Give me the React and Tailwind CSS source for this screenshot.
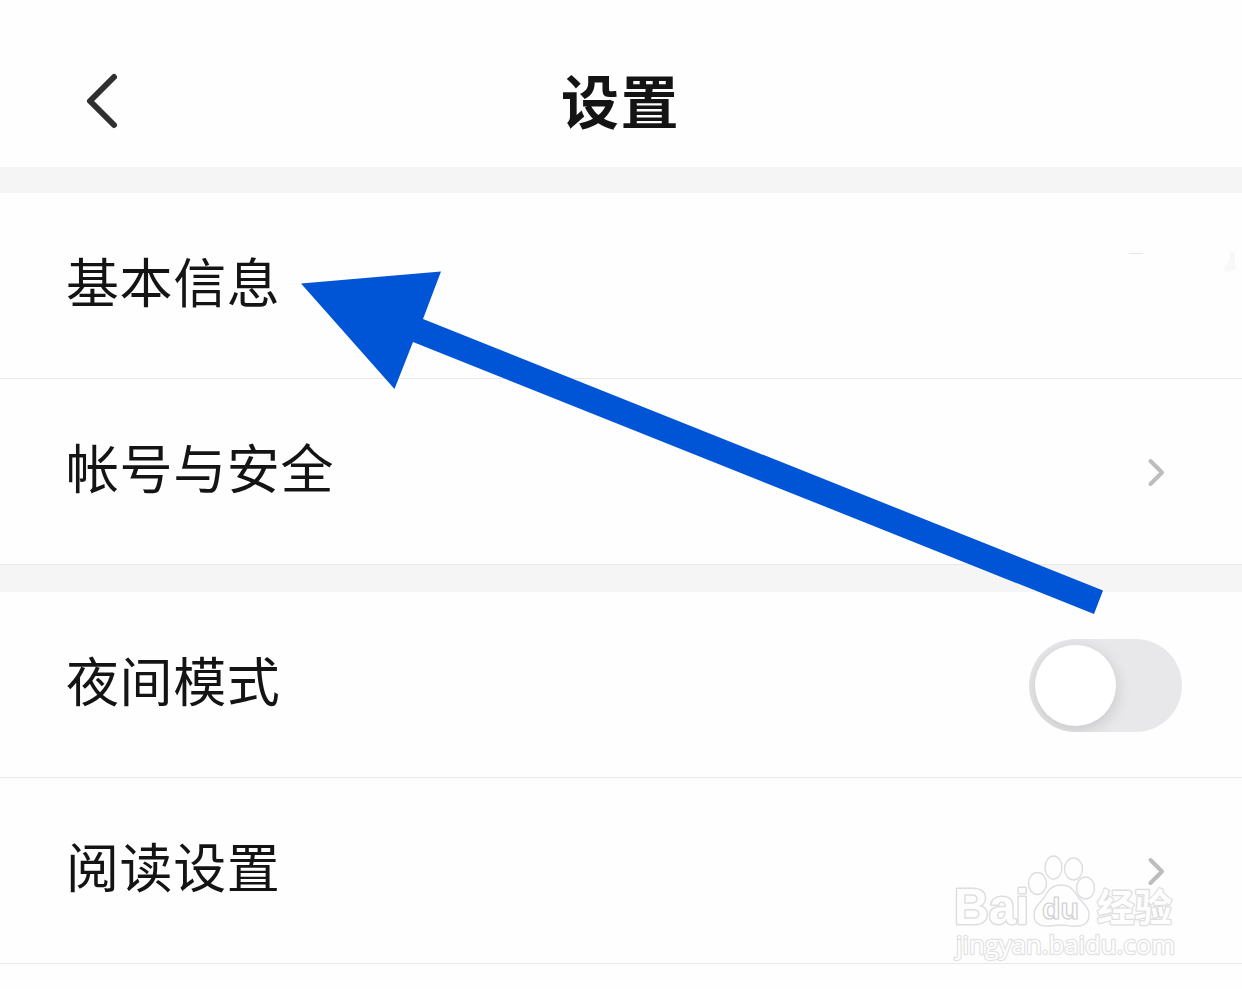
import React from "react";

const SECTIONS = [
  [
    { label: "基本信息", type: "faded" },
    { label: "帐号与安全", type: "link" },
  ],
  [
    { label: "夜间模式", type: "switch" },
    { label: "阅读设置", type: "link" },
  ],
];

function BackIcon() {
  return (
    <svg viewBox="0 0 40 60" className="w-10 h-15" fill="none" stroke="#303031"
      strokeWidth="6" strokeLinecap="round" strokeLinejoin="round">
      <path d="M32 6 8 30l24 24" />
    </svg>
  );
}

function Chevron() {
  return (
    <svg viewBox="0 0 24 32" className="w-6 h-8 mr-[17px]" fill="none" stroke="#bdbdbd"
      strokeWidth="4" strokeLinecap="round" strokeLinejoin="round">
      <path d="M9.5 5 21 16.500 9.5 28" />
    </svg>
  );
}

function Switch() {
  return (
    <button type="button" role="switch" aria-checked="false"
      className="w-[153px] h-[93px] mt-0.5 p-1.5 rounded-full bg-[#e8e8ea] overflow-hidden">
      <span className="block w-[81px] h-[81px] rounded-full bg-white shadow-[0_4px_16px_rgba(0,0,0,0.15)]" />
    </button>
  );
}

// Valor casi borrado a la derecha de la fila
function FadedValue() {
  return (
    <svg viewBox="0 0 120 40" className="w-[120px] h-10 -mr-[60px] -mt-[42px]">
      <path d="M7 8.500h14" stroke="#e6e6e6" fill="none" />
      <path d="M108 7v8l-5 6-1 5 5 1 6-3V7Z" fill="#f8f8f8" />
    </svg>
  );
}

function Row({ label, type }) {
  return (
    <div className="flex items-center justify-between h-[186px] pl-[66px] pr-[60px] border-b border-[#e8e8e8] bg-[#fefefe]">
      <span className="text-[53px] leading-[60px] tracking-[0.6px] -mt-3">{label}</span>
      {type === "faded" && <FadedValue />}
      {type === "link" && <Chevron />}
      {type === "switch" && <Switch />}
    </div>
  );
}

// Flecha que señala la primera opción
function Arrow() {
  return (
    <svg viewBox="0 0 1242 989" className="absolute inset-0 w-full h-full pointer-events-none">
      <path d="M301 283.5 441 271.5 423 319 1103 590.5 1094 614 413 342 394.5 389Z" fill="#0055d6" />
    </svg>
  );
}

function Watermark() {
  return (
    <svg viewBox="0 0 250 120" className="absolute left-[940px] top-[850px] w-[250px] h-[120px] pointer-events-none"
      fill="#fefefe" stroke="#dedede" strokeWidth="1.4" strokeLinejoin="round">
      <text x="14" y="74" fontSize="50" textLength="75" lengthAdjust="spacingAndGlyphs"
        strokeWidth="3" paintOrder="stroke"
        className="font-['Liberation_Sans',sans-serif] font-bold">Bai</text>
      <ellipse cx="97.500" cy="33.500" rx="9" ry="11" />
      <ellipse cx="113.500" cy="17.500" rx="8.500" ry="11.500" />
      <ellipse cx="133.500" cy="19" rx="9" ry="11" />
      <ellipse cx="145.500" cy="38" rx="9" ry="11" />
      <path d="M121 35C110 35 107 43 103 49C98 55 94 58 94 65C94 73 100 76 107 76C113 76 116 75 121 75C127 75 131 77 137 76C145 76 150 71 149 63C148 56 142 53 138 47C134 40 130 35 121 35Z" />
      <text x="102" y="69" fontSize="30" textLength="37" lengthAdjust="spacingAndGlyphs"
        stroke="#cfcfcf" strokeWidth="1.2"
        className="font-['Liberation_Sans',sans-serif] font-bold">du</text>
      <text x="157" y="71" fontSize="38" textLength="75" lengthAdjust="spacingAndGlyphs"
        strokeWidth="2.6" paintOrder="stroke"
        className="font-['Noto_Sans_CJK_SC',sans-serif] font-bold">经验</text>
      <text x="16" y="104" fontSize="25" textLength="219" lengthAdjust="spacingAndGlyphs"
        stroke="#e2e2e2" strokeWidth="2.4" paintOrder="stroke"
        className="font-['Open_Sans',sans-serif]">jingyan.baidu.com</text>
    </svg>
  );
}

export default function App() {
  return (
    <div className="relative w-[1242px] h-[989px] overflow-hidden bg-[#fefefe] text-[#141414] font-['Noto_Sans_CJK_SC',sans-serif]">
      <header className="grid grid-cols-3 items-center h-[167px] px-[82px] pt-[35px] bg-[#fefefe]">
        <BackIcon />
        <h1 className="-mt-[5px] -ml-px text-center text-[58px] leading-[80px] tracking-[1.5px] font-bold">设置</h1>
      </header>
      {SECTIONS.map((rows, i) => (
        <section key={i}>
          <div className={i === 0 ? "h-[26px] bg-[#f5f5f5]" : "h-[27px] bg-[#f5f5f5]"} />
          {rows.map((row) => (
            <Row key={row.label} {...row} />
          ))}
        </section>
      ))}
      <Arrow />
      <Watermark />
    </div>
  );
}
